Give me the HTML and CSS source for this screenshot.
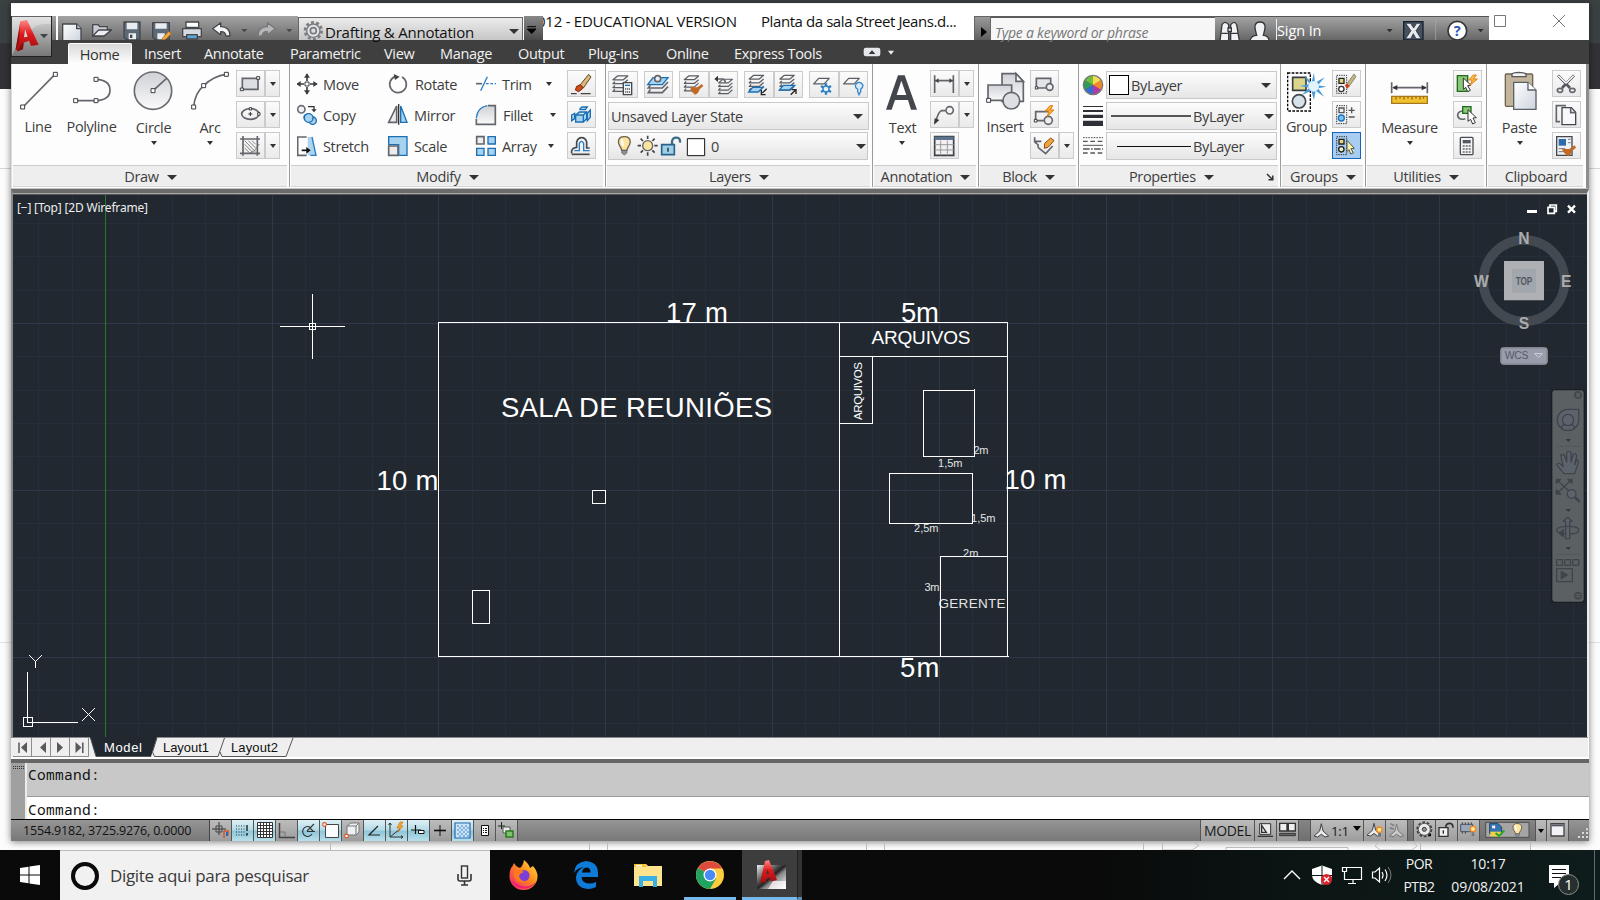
FILE: index.html
```html
<!DOCTYPE html>
<html lang="pt-BR">
<head>
<meta charset="utf-8">
<title>AutoCAD 2012 - Planta da sala</title>
<link rel="stylesheet" href="styles.css">
</head>
<body>
<svg class="defs" width="0" height="0" aria-hidden="true">
  <defs>
    <linearGradient id="gm" x1="0" y1="0" x2="0" y2="1"><stop offset="0" stop-color="#cfd1d6"/><stop offset="1" stop-color="#fafafa"/></linearGradient>
    <linearGradient id="gp" x1="0" y1="0" x2="1" y2="1"><stop offset="0" stop-color="#fff"/><stop offset="1" stop-color="#cdd4de"/></linearGradient>
    <linearGradient id="gr" x1="0" y1="0" x2="0" y2="1"><stop offset="0" stop-color="#ff8a86"/><stop offset=".45" stop-color="#e01a1c"/><stop offset="1" stop-color="#9c0f12"/></linearGradient>
    <linearGradient id="gf" x1="1" y1="0" x2="0" y2="1"><stop offset="0" stop-color="#ffe34a"/><stop offset=".45" stop-color="#ff8a1c"/><stop offset="1" stop-color="#f0187e"/></linearGradient>
    <linearGradient id="gk" x1="0" y1="0" x2="1" y2="1"><stop offset="0" stop-color="#eee"/><stop offset=".5" stop-color="#222"/><stop offset=".6" stop-color="#888"/><stop offset="1" stop-color="#fff"/></linearGradient>
    <symbol id="stack" viewBox="0 0 60 60" overflow="visible"><path class="sh" d="M16 2H48L34 14H2ZM8 20L2 26H34L48 14M8 31L2 38H34L48 25M8 43L2 50H34L48 37"/></symbol>
    <symbol id="plane" viewBox="0 0 60 60" overflow="visible"><path class="sh" d="M16 2H50L34 20H0Z"/></symbol>
    <symbol id="scaleA" viewBox="0 0 44 44" overflow="visible"><path d="M22 1L27 23L44 38L33 41L22 33L11 41L0 38L17 23Z" fill="#e9e9ec" stroke="#3c3f44" stroke-width="3"/></symbol>
    <symbol id="bulb" viewBox="0 0 40 60" overflow="visible"><path d="M12 44C12 34 2 30 2 18C2 7 10 2 20 2S38 7 38 18C38 30 28 34 28 44Z" fill="#fbe3a0" stroke="#6c5f4c" stroke-width="4"/><path d="M12 44H28V52L20 58L12 52Z" fill="#8c9098" stroke="#5b5f66" stroke-width="2"/><path d="M12 10L16 30" stroke="#fff" stroke-width="6"/></symbol>
  </defs>
</svg>

<div class="desktop">
<div class="window">
  <header class="titlebar">
    <div class="appbtn">
      <svg width="41" height="40" viewBox="34 48 123 120"><path d="M110 78Q130 70 154 72V48H36V168Q60 110 110 78Z" fill="#fff" opacity=".3"/><path d="M48 148L62 64L82 60L117 134L94 138L88 122L72 128L70 148L54 154Z" fill="url(#gr)"/><path d="M76 88L84 110L73 112Z" fill="#d8d8d8"/><path d="M54 154L70 148L72 128L64 132ZM48 148L62 64L58 130Z" fill="#6f0a0c" opacity=".6"/><path d="M121 102H145L133 115Z" fill="#3c444d"/></svg>
    </div>
    <div class="qat">
      <svg width="240" height="23" viewBox="174 51 720 69"><g stroke="#44474c" stroke-width="4" stroke-linejoin="round">
        <path d="M188 72H230L243 86V122H188Z" fill="url(#gp)"/><path d="M230 72V86H243" fill="#b9c0ca"/>
        <path d="M278 108V74H294L300 80H322V90H334L312 108Z" fill="#c9cdd3"/><path d="M278 108L296 90H334L312 108Z" fill="#eceef1"/>
        <path d="M372 66H420V118H378L372 112Z" fill="#5e6978"/><path d="M380 68H412V88H380ZM386 100H408V118H386Z" fill="#e9ecf0" stroke="none"/><path d="M390 104H397V114H390Z" fill="#444" stroke="none"/>
        <path d="M458 68H508V118H464L458 112Z" fill="#5e6978"/><path d="M466 70H500V86H466ZM472 100H494V118H472Z" fill="#e9ecf0" stroke="none"/><path d="M488 114L506 94L514 101L497 118L486 121Z" fill="#f2a93b" stroke="#a25a14" stroke-width="2"/>
        <path d="M558 84V66H596V84M560 82H592V90H560Z" fill="#fff"/><path d="M548 86H604V110H548Z" fill="#d6d9de"/><path d="M560 104H592V117H560Z" fill="#5fa5cf"/>
        <path d="M638 86L662 68V80Q690 80 690 108H678Q676 94 662 95V104Z" fill="#f4f5f7"/>
        <path d="M826 86L802 68V80Q774 80 774 108H786Q788 94 802 95V104Z" fill="#b4b6ba" stroke="#777"/></g>
        <path d="M724 87H742L733 97ZM859 87H877L868 97Z" fill="#45484c"/></svg>
    </div>
    <div class="workspace"><svg width="24" height="22" viewBox="905 55 72 66"><circle cx="939" cy="93" r="25" fill="none" stroke="#7c7f84" stroke-width="8" stroke-dasharray="9 6.7"/><circle cx="939" cy="93" r="20" fill="#e4e4e6" stroke="#777a80" stroke-width="4"/><circle cx="939" cy="93" r="9" fill="#ddd" stroke="#777a80" stroke-width="5"/></svg><span class="ws-name">Drafting &amp; Annotation</span><i class="tri"></i></div>
    <div class="qat-more"><svg width="18" height="23" viewBox="372 51 54 69"><path d="M382 80H408M382 87H408L395 101Z" fill="#000" stroke="#000" stroke-width="3"/></svg></div>
    <div class="doc-title"><span class="ver">012 - EDUCATIONAL VERSION</span><span class="doc">Planta da sala Street Jeans.d...</span></div>
    <div class="info-arrow"><svg width="17" height="23" viewBox="0 0 17 23"><path d="M6 10L12 15L6 20Z" fill="#000"/></svg></div>
    <div class="search-help">Type a keyword or phrase</div>
    <div class="infobar">
      <svg width="61" height="23" viewBox="1247 51 183 69"><g transform="translate(1200 0)" fill="#f1f2f4" stroke="#34373c" stroke-width="4"><path d="M62 122L68 74Q76 60 88 74V122ZM94 122V74Q106 60 112 74L120 122Z"/><path d="M66 100H88M94 100H116M86 84H96V94H86Z"/><path d="M152 122Q156 106 172 106L170 98Q160 66 182 66Q204 66 194 98L192 106Q206 106 210 122Z"/></g></svg>
      <span class="signin">Sign In</span>
      <svg width="104" height="23" viewBox="1757 51 312 69"><g transform="translate(1200 0)"><path d="M562 87H580L571 97ZM835 87H853L844 97Z" fill="#2e3033"/><path d="M613 65H671V120H613Z" fill="#46505f" stroke="#17202f" stroke-width="4"/><path d="M619 70H634L643 84L652 70H665L650 92L665 116H650L642 101L634 116H619L635 92Z" fill="#e8eaee" stroke="#17202f" stroke-width="2"/><path d="M709 60V120" stroke="#aaa" stroke-width="2"/><circle cx="774" cy="92" r="28" fill="#fff" stroke="#34373c" stroke-width="5"/></g><text x="1974" y="109" class="help-q">?</text></svg>
    </div>
    <div class="winctl"><svg width="90" height="36" viewBox="1500 3 90 36" fill="none" stroke="#777"><path d="M1494.5 14.5H1505.5V25.5H1494.5ZM1553 14L1565 26M1565 14L1553 26" /></svg></div>
  </header>

  <nav class="tabs">
    <span class="tab active">Home</span><span class="tab w60">Insert</span><span class="tab w86">Annotate</span><span class="tab w94">Parametric</span><span class="tab w56">View</span><span class="tab w78">Manage</span><span class="tab w70">Output</span><span class="tab w78">Plug-ins</span><span class="tab w68">Online</span><span class="tab w129">Express Tools</span>
    <svg width="34" height="12" viewBox="190 142 102 36"><rect x="192" y="144" width="50" height="26" rx="7" fill="#e6e7ea"/><path d="M207 163H227L217 152Z" fill="#333"/><path d="M265 153H283L274 165Z" fill="#eee"/></svg>
  </nav>

  <section class="ribbon">
    <div class="panel p-draw">
      <div class="pbody">
        <div class="big w52"><svg width="52" height="50" viewBox="36 192 156 150"><path class="ln" d="M69 321L165 223"/><path class="hd" d="M62 315H74V327H62ZM160 217H172V229H160Z"/></svg><span>Line</span></div>
        <div class="big w55"><svg width="55" height="50" viewBox="192 192 165 150"><path class="ln" d="M227 302H288Q330 300 330 270Q330 240 288 238"/><path class="hd" d="M221 296H233V308H221ZM282 296H294V308H282ZM282 232H294V244H282Z"/></svg><span>Polyline</span></div>
        <div class="big w69 low"><svg width="69" height="50" viewBox="357 192 207 150"><circle cx="459" cy="272" r="56" fill="url(#gm)" stroke="#6a6c72" stroke-width="5"/><path class="ln" d="M459 272L499 236"/><path class="hd" d="M453 266H465V278H453Z"/></svg><span>Circle</span><i class="dn"></i></div>
        <div class="big w46 low"><svg width="46" height="50" viewBox="564 192 138 150"><path class="ln" d="M581 321Q584 280 611 257Q640 228 679 223"/><path class="hd" d="M575 315H587V327H575ZM605 251H617V263H605ZM673 217H685V229H673Z"/></svg><span class="nr">Arc</span><i class="dn nr"></i></div>
        <div class="col">
          <div class="row"><b class="btn"><svg width="29" height="27" viewBox="708 210 87 81"><path class="ln" d="M727 235H774V268H727Z" fill="#dcdee3"/><path class="hd" d="M721 264H730V272H721ZM770 230H779V238H770Z"/></svg></b><b class="btn dd"><i class="dn"></i></b></div>
          <div class="row"><b class="btn"><svg width="29" height="27" viewBox="708 303 87 81"><ellipse class="ln" cx="751" cy="342" rx="26" ry="16"/><path d="M745 342H757M751 336V348" stroke="#333" stroke-width="3"/><path class="hd" d="M748 323H755V330H748ZM773 338H780V346H773Z"/></svg></b><b class="btn dd"><i class="dn"></i></b></div>
          <div class="row"><b class="btn"><svg width="29" height="27" viewBox="708 396 87 81"><path class="ln" d="M720 417H780M720 460H780M729 408V467M772 408V467"/><path d="M734 422L766 455M734 433L758 457M734 444L747 457M745 422L767 444M756 422L767 433M778 432L764 452L748 460" stroke="#666" stroke-width="2.4" fill="none"/></svg></b><b class="btn dd"><i class="dn"></i></b></div>
        </div>
      </div>
      <div class="ptitle">Draw<i class="tri"></i></div>
    </div>

    <div class="panel p-modify">
      <div class="pbody">
        <div class="col c90">
          <div class="row"><svg width="26" height="27" viewBox="891 210 78 81"><path d="M921 222V282M891 252H951" stroke="#3b3e43" stroke-width="5"/><path d="M921 220L912 233H930ZM921 284L912 271H930ZM889 252L902 243V261ZM953 252L940 243V261Z" fill="#3b3e43"/><path d="M912 243H930V261H912Z" fill="#fff"/><path class="hd" d="M915 246H927V258H915Z"/></svg><span>Move</span></div>
          <div class="row"><svg width="26" height="27" viewBox="891 303 78 81"><circle cx="904" cy="328" r="11" fill="#f3f3f5" stroke="#6a6c72" stroke-width="5"/><g class="bl"><circle cx="921" cy="352" r="9"/><circle cx="938" cy="362" r="11"/><circle cx="926" cy="354" r="13"/></g><path d="M924 320H942V331" stroke="#333" stroke-width="4" fill="none"/><path d="M934 328H950L942 337Z" fill="#333"/></svg><span>Copy</span></div>
          <div class="row"><svg width="26" height="27" viewBox="891 396 78 81"><path class="ln" d="M920 411H893V466H920"/><path d="M923 411H936L948 466H923Z" fill="#abd5ec"/><path class="bs" d="M936 411L948 466H931"/><path d="M905 451H922" stroke="#111" stroke-width="5"/><path d="M919 441L932 451L919 461Z" fill="#111"/></svg><span>Stretch</span></div>
        </div>
        <div class="col c88">
          <div class="row"><svg width="28" height="27" viewBox="1161 210 84 81"><path class="ln" d="M1187 229A25 25 0 1 0 1206 231"/><path d="M1181 222L1199 230L1185 240Z" fill="#444"/></svg><span>Rotate</span></div>
          <div class="row"><svg width="27" height="27" viewBox="1161 303 81 81"><path d="M1190 318V367H1166Z" fill="#eee" class="ln"/><path d="M1202 318V367H1221Z" class="bl"/><path d="M1196 312V374" stroke="#333" stroke-width="4"/></svg><span>Mirror</span></div>
          <div class="row"><svg width="27" height="27" viewBox="1161 396 81 81"><path class="bl" d="M1166 410H1221V466H1196V434H1166Z"/><path d="M1166 438H1194V466H1166Z" fill="#ececef" class="ln"/></svg><span>Scale</span></div>
        </div>
        <div class="col c92">
          <div class="row"><svg width="27" height="27" viewBox="225 210 81 81"><path class="ln" d="M228 251H246" /><path class="bs" d="M262 230L242 272"/><path class="bs" d="M258 251H288" stroke-dasharray="8 5"/></svg><span class="tx46">Trim</span><i class="dn"></i></div>
          <div class="row"><svg width="28" height="27" viewBox="225 303 84 81"><path d="M229 373V352Q232 322 262 317H286V373Z" fill="url(#gm)"/><path class="bs" d="M229 354Q232 322 262 317"/><path class="ln" d="M229 356V373H286V317H264"/></svg><span class="tx49">Fillet</span><i class="dn"></i></div>
          <div class="row"><svg width="27" height="27" viewBox="225 396 81 81"><path d="M230 410H252V432H230Z" fill="#eee" class="ln"/><path class="bl" d="M264 410H286V432H264ZM230 445H252V466H230ZM264 445H286V466H264Z"/></svg><span class="tx48">Array</span><i class="dn"></i></div>
        </div>
        <div class="col">
          <div class="row"><b class="btn"><svg width="29" height="27" viewBox="501 210 87 81"><path d="M541 254L566 223L573 231L550 264Z" fill="#e0b678" stroke="#5c4b33" stroke-width="3"/><path d="M541 254L550 264L536 275L526 270L530 259Z" fill="#cf4a16" stroke="#7c2b0c" stroke-width="3"/><path d="M513 281H530M542 281H572" stroke="#444" stroke-width="4"/></svg></b></div>
          <div class="row"><b class="btn"><svg width="29" height="27" viewBox="501 303 87 81"><path class="bl" d="M527 345H550V366H527ZM550 345L560 336V356L550 366M527 345L538 336H560M562 340L571 330V352L562 362ZM515 345L524 340V356L515 362ZM540 326L546 321H562L556 329H540Z"/></svg></b></div>
          <div class="row"><b class="btn"><svg width="29" height="27" viewBox="501 396 87 81"><path d="M515 460Q512 444 530 442V426Q534 413 545 413T560 426V444H569" fill="none" stroke="#45484d" stroke-width="5"/><path class="bs" d="M523 452H538V430Q544 418 551 430V452H569"/><path d="M515 463H569" stroke="#45484d" stroke-width="5"/></svg></b></div>
        </div>
      </div>
      <div class="ptitle">Modify<i class="tri"></i></div>
    </div>

    <div class="panel p-layers">
      <div class="pbody">
        <div class="col">
          <div class="row lrow">
            <b class="btn"><svg width="29" height="27" viewBox="624 213 87 81"><use href="#stack" x="637" y="226" width="58" height="58"/><path d="M670 248H695V284H670Z" fill="#f4f4f6" stroke="#45484d" stroke-width="4"/><path d="M675 256H690" stroke="#1c7ac9" stroke-width="4"/><path d="M675 267H690M675 276H690" stroke="#555" stroke-width="4" stroke-dasharray="4 2"/></svg></b>
            <b class="btn g6"><svg width="29" height="27" viewBox="729 213 87 81"><path d="M756 233H801L784 254H740Z" class="bl"/><path class="ln" d="M748 256L742 264H784L801 246M748 268L742 278H784L801 260"/><circle cx="770" cy="236" r="9" class="ln" fill="#eee"/></svg></b>
            <b class="btn g6"><svg width="29" height="27" viewBox="834 213 87 81"><use href="#stack" x="848" y="226" width="56" height="56"/><path d="M870 262H890L902 252L907 258L896 268Q892 282 882 284Q872 278 868 268Z" fill="#c26a23"/></svg></b>
            <b class="btn"><svg width="29" height="27" viewBox="921 213 87 81"><use href="#stack" x="946" y="236" width="58" height="54"/><path d="M946 237H962Q970 240 970 248" class="ln"/><path d="M948 227L937 237L948 246Z" fill="#333"/></svg></b>
            <b class="btn g6"><svg width="29" height="27" viewBox="1029 213 87 81"><use href="#stack" x="1043" y="224" width="56" height="56"/><path d="M1055 262H1086L1072 276H1043Z" class="bl"/><path d="M1097 266L1084 279M1081 270V284H1094" stroke="#222" stroke-width="4" fill="none"/></svg></b>
            <b class="btn"><svg width="29" height="27" viewBox="1120 213 87 81"><use href="#stack" x="1136" y="224" width="56" height="56"/><path d="M1148 256H1182L1166 270H1136Z" class="bl"/><path d="M1170 284L1184 271M1173 269H1186V282" stroke="#222" stroke-width="4" fill="none"/></svg></b>
            <b class="btn g6"><svg width="29" height="27" viewBox="24 213 87 81"><use href="#plane" x="38" y="233" width="56" height="56"/><path d="M75 250V284M60 258L90 276M90 258L60 276" stroke="#2f7fc4" stroke-width="7"/><circle cx="75" cy="267" r="9" fill="#e6f2fb" stroke="#2f7fc4" stroke-width="4"/></svg></b>
            <b class="btn"><svg width="29" height="27" viewBox="114 213 87 81"><use href="#plane" x="128" y="233" width="56" height="56"/><path d="M170 275V268Q162 262 163 256Q166 247 174 247T186 256Q186 262 179 268V275L174 284Z" fill="#d9ebfa" stroke="#3a86cb" stroke-width="4"/></svg></b>
          </div>
          <div class="select s261"><span>Unsaved Layer State</span><i class="tri"></i></div>
          <div class="select s260"><svg width="100" height="28" viewBox="624 396 300 84"><use href="#bulb" x="653" y="408" width="40" height="59"/><path d="M743 407V417M743 457V467M713 437H723M763 437H773M722 416L729 423M764 416L757 423M722 458L729 451M764 458L757 451" stroke="#444" stroke-width="5"/><circle cx="743" cy="437" r="15" fill="#fbe3a0" stroke="#666" stroke-width="4"/><path d="M816 434V424Q818 412 830 413T840 428" fill="none" stroke="#3d6d8a" stroke-width="7"/><path d="M785 434H823V464H785Z" fill="#9fd0ea" stroke="#2a6387" stroke-width="5"/><path d="M804 443V455" stroke="#222" stroke-width="4"/><path d="M862 416H914V467H862Z" fill="#fff" stroke="#111" stroke-width="3"/></svg><span>0</span><i class="tri"></i></div>
        </div>
      </div>
      <div class="ptitle">Layers<i class="tri"></i></div>
    </div>

    <div class="panel p-anno">
      <div class="pbody">
        <div class="big w58 low"><svg width="58" height="50" viewBox="219 192 174 150"><path d="M258 329L294 226H314L351 329H333L324 300H285L275 329ZM290 285H319L304 242Z" fill="#43464c" fill-rule="evenodd"/></svg><span class="nudge">Text</span><i class="dn"></i></div>
        <div class="col">
          <div class="row"><b class="btn"><svg width="29" height="27" viewBox="390 210 87 81"><path class="ln" d="M404 226V279M460 226V279M406 242H458"/><path d="M405 242L416 235V249ZM459 242L448 235V249Z" fill="#444"/></svg></b><b class="btn dd"><i class="dn"></i></b></div>
          <div class="row"><b class="btn"><svg width="29" height="27" viewBox="390 303 87 81"><path class="ln" d="M408 366Q412 340 424 332H436"/><circle class="ln" cx="449" cy="331" r="11"/><path d="M402 374L404 355L418 360Z" fill="#333"/></svg></b><b class="btn dd"><i class="dn"></i></b></div>
          <div class="row"><b class="btn"><svg width="29" height="27" viewBox="390 396 87 81"><path d="M404 410H461V466H404Z" fill="#f2f2f4" stroke="#3d4046" stroke-width="5"/><path d="M404 410H461V420H404Z" fill="#5d7390"/><path d="M404 434H461M404 450H461M422 422V466M442 422V466" stroke="#999" stroke-width="3"/></svg></b></div>
        </div>
      </div>
      <div class="ptitle">Annotation<i class="tri"></i></div>
    </div>

    <div class="panel p-block">
      <div class="pbody">
        <div class="big w51"><svg width="51" height="50" viewBox="537 192 153 150"><path d="M606 221H648L670 244V304H606Z" fill="url(#gm)" class="ln"/><path d="M648 221V244H670Z" fill="#fff" class="ln"/><path d="M564 255H635V301H564Z" fill="url(#gm)" class="ln"/><circle cx="634" cy="302" r="25" fill="#dddfe3" class="ln"/><path class="hd" d="M560 295H572V307H560Z"/></svg><span class="nl">Insert</span></div>
        <div class="col">
          <div class="row"><b class="btn"><svg width="29" height="27" viewBox="690 210 87 81"><path d="M709 235H752V264H709Z" fill="#e3e4e8" class="ln"/><circle class="ln" cx="749" cy="261" r="10" fill="#eee"/><path class="hd" d="M706 260H713V267H706Z"/></svg></b></div>
          <div class="row"><b class="btn"><svg width="29" height="27" viewBox="690 303 87 81"><path class="ln" d="M744 335H707V362H735"/><circle class="ln" cx="745" cy="361" r="12" fill="#eee"/><path class="hd" d="M703 358H711V366H703Z"/><path d="M750 317L736 333H747L742 349L762 330H751L758 317Z" fill="#f9b12f" stroke="#e07a18" stroke-width="3"/></svg></b></div>
          <div class="row"><b class="btn"><svg width="29" height="27" viewBox="690 396 87 81"><path class="ln" d="M704 412V424H724M704 426L712 432M714 442L737 461L758 438M714 442V432"/><path d="M734 430L752 414L762 422L744 442L733 445Z" fill="#efa53c" stroke="#8b4c15" stroke-width="3"/></svg></b><b class="btn dd"><i class="dn"></i></b></div>
        </div>
      </div>
      <div class="ptitle">Block<i class="tri"></i></div>
    </div>

    <div class="panel p-props">
      <div class="pbody">
        <svg width="27" height="101" viewBox="837 192 81 303"><circle cx="879" cy="255" r="28" fill="#e8452f"/><path d="M879 255L855 241A28 28 0 0 1 879 227Z" fill="#6cbf3a"/><path d="M879 255V227A28 28 0 0 1 903 241Z" fill="#f5dc55"/><path d="M879 255L903 241A28 28 0 0 1 903 269Z" fill="#f08a2c"/><path d="M879 255L855 269A28 28 0 0 1 855 241Z" fill="#2f9a5a"/><path d="M879 255V283A28 28 0 0 1 855 269Z" fill="#2f6fd1"/><path d="M879 255V283A28 28 0 0 0 903 269Z" fill="#b03aa5"/><circle cx="879" cy="255" r="29" fill="none" stroke="#777" stroke-width="4"/><path d="M849 318H909V321H849ZM849 330H909V336H849ZM849 344H909V354H849ZM849 362H909V378H849Z" fill="#2e3035"/><path d="M849 413H909" stroke="#555" stroke-width="3" stroke-dasharray="5 3"/><path d="M849 424H909M849 459H909" stroke="#555" stroke-width="4" stroke-dasharray="14 8"/><path d="M849 436H909" stroke="#555" stroke-width="3"/><path d="M849 447H909" stroke="#555" stroke-width="4" stroke-dasharray="20 4 5 4"/></svg>
        <div class="col">
          <div class="select s171 sp1"><i class="swatch"></i><span>ByLayer</span><i class="tri t2"></i></div>
          <div class="select s171"><i class="lw"></i><span>ByLayer</span><i class="tri"></i></div>
          <div class="select s171 sp3"><i class="lt"></i><span>ByLayer</span><i class="tri"></i></div>
        </div>
      </div>
      <div class="ptitle pr">Properties<i class="tri"></i><svg class="launch" width="8" height="8" viewBox="0 0 8 8"><path d="M1 1L6 6M2.5 6.8H6.8V2.5" stroke="#333" stroke-width="1.5" fill="none"/></svg></div>
    </div>

    <div class="panel p-groups">
      <div class="pbody">
        <div class="big w51"><svg width="51" height="50" viewBox="243 192 153 150"><path d="M263 219H331V333H263Z" fill="none" stroke="#000" stroke-width="4" stroke-dasharray="8 4"/><path d="M278 232H318V271H278Z" fill="#dcd68c" stroke="#3a3c40" stroke-width="5"/><circle cx="297" cy="304" r="20" fill="#d6e2ea" stroke="#44484e" stroke-width="5"/><path d="M342 218L345 248L374 232L354 256L380 260L354 265L372 290L347 272L342 300L334 272L304 286L328 263L300 258L328 252L312 226L335 247Z" fill="#4b9bd6"/><circle cx="341" cy="259" r="16" fill="#e2f3fc"/></svg><span>Group</span></div>
        <div class="col">
          <div class="row"><b class="btn"><svg width="29" height="27" viewBox="396 210 87 81"><path d="M410 226H440V280H410Z" class="dash"/><path d="M417 235H432V250H417Z" fill="#e4d77f" stroke="#222" stroke-width="4"/><circle cx="424" cy="267" r="8" fill="#fff" stroke="#333" stroke-width="4"/><path d="M440 252L462 222L468 230L448 258Z" fill="#c5b37a" stroke="#666" stroke-width="2"/><path d="M434 256L441 251L449 258L442 266Z" fill="#d23a1c"/></svg></b></div>
          <div class="row"><b class="btn"><svg width="29" height="27" viewBox="396 303 87 81"><path d="M410 317H440V371H410Z" class="dash"/><path d="M417 324H432V338H417Z" fill="#eee" stroke="#555" stroke-width="4"/><circle cx="424" cy="354" r="9" fill="#7fc0ee" stroke="#1d75bd" stroke-width="4"/><path d="M446 331H464M455 322V340M446 351H464" stroke="#555" stroke-width="4"/></svg></b></div>
          <div class="row"><b class="btn on"><svg width="29" height="27" viewBox="396 396 87 81"><path d="M410 410H440V464H410Z" class="dash"/><path d="M417 418H432V432H417Z" fill="#e4d77f" stroke="#222" stroke-width="4"/><circle cx="424" cy="448" r="8" fill="#e9f1c8" stroke="#222" stroke-width="4"/><path d="M441 421L463 445L453 446L460 459L452 462L447 449L441 455Z" fill="#fff3a8" stroke="#555" stroke-width="3"/></svg></b></div>
        </div>
      </div>
      <div class="ptitle">Groups<i class="tri"></i></div>
    </div>

    <div class="panel p-util">
      <div class="pbody">
        <div class="big w87 low"><svg width="87" height="50" viewBox="498 192 261 150"><path class="ln" d="M575 247V280M682 247V280M580 263H678"/><path d="M577 263L592 255V271ZM680 263L665 255V271Z" fill="#333"/><path d="M575 289H682V310H575Z" fill="#f0c22e" stroke="#a8761c" stroke-width="4"/><path d="M588 291V299M600 291V296M612 291V299M624 291V296M636 291V299M648 291V296M660 291V299M671 291V296" stroke="#7a5010" stroke-width="3"/></svg><span>Measure</span><i class="dn"></i></div>
        <div class="col">
          <div class="row"><b class="btn"><svg width="29" height="27" viewBox="759 210 87 81"><path d="M772 227H803V274H772Z" fill="#8ac776" stroke="#216b1c" stroke-width="4"/><path d="M790 234L813 256L803 257L811 271L803 275L797 262L790 268Z" fill="#fff" stroke="#333" stroke-width="3"/><path d="M820 225L806 240H817L810 256L832 237H820L829 225Z" fill="#fbc33d" stroke="#e07a18" stroke-width="3"/></svg></b></div>
          <div class="row"><b class="btn"><svg width="29" height="27" viewBox="759 303 87 81"><path d="M788 320H813V340H788Z" fill="#8ac776" stroke="#216b1c" stroke-width="4"/><path class="ln" d="M786 333Q772 336 773 348Q778 362 796 356"/><path d="M804 329L829 353L819 354L826 368L818 372L812 358L804 364Z" fill="#fff" stroke="#333" stroke-width="3"/></svg></b></div>
          <div class="row"><b class="btn"><svg width="29" height="27" viewBox="759 396 87 81"><rect x="781" y="412" width="38" height="52" rx="3" fill="#f4f4f6" stroke="#4a4e55" stroke-width="4"/><path d="M788 420H812V430H788Z" fill="#55595f"/><path d="M788 438H812M788 447H812M788 456H812" stroke="#666" stroke-width="4" stroke-dasharray="6 3"/></svg></b></div>
        </div>
      </div>
      <div class="ptitle">Utilities<i class="tri"></i></div>
    </div>

    <div class="panel p-clip">
      <div class="pbody">
        <div class="big w65 low"><svg width="65" height="50" viewBox="861 192 195 150"><rect x="916" y="222" width="82" height="97" rx="3" fill="#c3b49c" stroke="#6f6250" stroke-width="4"/><path d="M936 230V222Q938 218 956 217Q974 218 978 222V230Z" fill="#f3f3f4" stroke="#55585e" stroke-width="4"/><path d="M941 247H984L1008 270V328H941Z" fill="url(#gp)" stroke="#5b5f66" stroke-width="4"/><path d="M984 247V270H1008" fill="#fff" stroke="#5b5f66" stroke-width="4"/></svg><span>Paste</span><i class="dn"></i></div>
        <div class="col">
          <div class="row"><b class="btn"><svg width="29" height="27" viewBox="1056 210 87 81"><path d="M1074 226L1110 264M1122 226L1086 264" stroke="#55585e" stroke-width="8"/><path d="M1075 227L1098 250M1121 227L1098 250" stroke="#fff" stroke-width="4"/><ellipse cx="1080" cy="271" rx="8" ry="6" class="ln"/><ellipse cx="1117" cy="271" rx="8" ry="6" class="ln"/></svg></b></div>
          <div class="row"><b class="btn"><svg width="29" height="27" viewBox="1056 303 87 81"><path class="ln" d="M1098 317H1069V365H1080"/><path d="M1086 323H1114L1127 337V374H1086Z" fill="#f8f8fa" stroke="#44474d" stroke-width="4"/><path d="M1112 323V338H1127" class="ln"/></svg></b></div>
          <div class="row"><b class="btn"><svg width="29" height="27" viewBox="1056 396 87 81"><path d="M1070 410H1116V466H1070Z" fill="#eef1f5" stroke="#44474d" stroke-width="4"/><path d="M1076 417H1098V437H1076Z" fill="#2f6ba8"/><path d="M1104 418H1112M1104 428H1112M1076 446H1096M1076 455H1092" stroke="#777" stroke-width="3"/><path d="M1086 447H1108L1124 436L1128 443L1116 453Q1112 466 1104 468Q1092 462 1086 447Z" fill="#c26a23"/></svg></b></div>
        </div>
      </div>
      <div class="ptitle">Clipboard</div>
    </div>
  </section>

  <main class="viewport">
    <svg width="1574" height="542" viewBox="13 195 1574 542">
      <path class="g-min" d="M38.5 195v542M72.5 195v542M138.5 195v542M172.5 195v542M205.5 195v542M238.5 195v542M305.5 195v542M339.5 195v542M372.5 195v542M405.5 195v542M472.5 195v542M505.5 195v542M539.5 195v542M572.5 195v542M638.5 195v542M672.5 195v542M705.5 195v542M739.5 195v542M805.5 195v542M839.5 195v542M872.5 195v542M905.5 195v542M972.5 195v542M1006.5 195v542M1039.5 195v542M1072.5 195v542M1139.5 195v542M1172.5 195v542M1206.5 195v542M1239.5 195v542M1306.5 195v542M1339.5 195v542M1373.5 195v542M1406.5 195v542M1473.5 195v542M1506.5 195v542M1539.5 195v542M1573.5 195v542M13 223.5h1574M13 256.5h1574M13 290.5h1574M13 356.5h1574M13 390.5h1574M13 423.5h1574M13 456.5h1574M13 523.5h1574M13 557.5h1574M13 590.5h1574M13 623.5h1574M13 690.5h1574M13 723.5h1574"/>
      <path class="g-maj" d="M272.5 195v542M438.5 195v542M605.5 195v542M772.5 195v542M939.5 195v542M1106.5 195v542M1272.5 195v542M1439.5 195v542M13 323.5h1574M13 490.5h1574M13 657.5h1574"/>
      <path d="M105.5 195v542" stroke="#267a27"/>
      <text x="17" y="212" class="vlabel" textLength="131">[−] [Top] [2D Wireframe]</text>
      <g class="plan">
        <path d="M438.5 322.5H1007.5V656.5H438.5ZM839.5 322.5V656.5M839.5 356.5H1007.5M872.5 356.5V423.5H839.5M923.5 390.5H974.5V456.5H923.5ZM974.5 389V391M889.5 473.5H972.5V523.5H889.5ZM940.5 656.5V556.5H1007.5M1007 656.5H1009M592.5 490.5H605.5V503.5H592.5ZM472.5 590.5H489.5V623.5H472.5Z"/>
        <path d="M280 326.5H345M312.5 294V359M309.5 323.5H315.5V329.5H309.5Z"/>
        <path d="M23.5 717.5H32.5V726.5H23.5ZM27.5 672V722.5H78"/>
        <path class="aa" d="M29 655L35.5 661.5L42 655M35.5 661V668M82 708L95 721M95 708L82 721"/>
      </g>
      <g class="cadtext">
        <text x="501" y="416.7" font-size="27.5" textLength="271">SALA DE REUNIÕES</text>
        <text x="666" y="321.7" font-size="27.5" textLength="62">17 m</text>
        <text x="376.500" y="489.700" font-size="27.5" textLength="62">10 m</text>
        <text x="901" y="321.700" font-size="27.5" textLength="38">5m</text>
        <text x="900" y="676.700" font-size="27.5" textLength="39.500">5m</text>
        <text x="1004.500" y="488.700" font-size="27.5" textLength="62">10 m</text>
        <text x="871.5" y="343.700" font-size="19" textLength="99">ARQUIVOS</text>
        <text transform="translate(861.8 420) rotate(-90)" font-size="11.5" textLength="58">ARQUIVOS</text>
        <g class="soft">
        <text x="973.5" y="453.6" font-size="11" textLength="15">2m</text>
        <text x="938" y="467" font-size="11" textLength="24.5">1,5m</text>
        <text x="971" y="522" font-size="11" textLength="24.5">1,5m</text>
        <text x="914" y="532" font-size="11" textLength="24.5">2,5m</text>
        <text x="963" y="556.6" font-size="11" textLength="15.5">2m</text>
        <text x="924.5" y="591" font-size="11" textLength="15">3m</text>
        <text x="938.5" y="608" font-size="13.5" textLength="67">GERENTE</text>
        </g>
      </g>
      <g transform="translate(1400 190) scale(.33333)">
        <path d="M381 60H411V69H381Z" fill="#fff"/><path d="M444 52H463V70H444ZM450 52V45H469V64H463" fill="none" stroke="#fff" stroke-width="5"/><path d="M504 47L525 68M525 47L504 68" stroke="#fff" stroke-width="7"/>
        <circle cx="372" cy="272" r="122" fill="none" stroke="#434950" stroke-width="28"/>
        <path d="M312 213H432V331H312Z" fill="#afb0b3"/><path d="M336 237H408V308H336Z" fill="#a1a7ac"/>
        <text x="372" y="284" class="cube" font-size="31" fill="#53585e" textLength="50" lengthAdjust="spacingAndGlyphs">TOP</text>
        <g class="compass"><text x="372" y="163">N</text><text x="372" y="418">S</text><text x="244" y="290">W</text><text x="499" y="290">E</text></g>
        <rect x="301" y="472" width="142" height="52" rx="10" fill="#999dab"/><rect x="304" y="475" width="136" height="46" rx="8" fill="none" stroke="#8b8f9c" stroke-width="4"/>
        <text x="314" y="507" class="wcs" textLength="71">WCS</text><path d="M404 491H427L415.500 502Z" fill="none" stroke="#cdd0da" stroke-width="3"/>
        <rect x="453" y="597" width="102" height="642" rx="10" fill="#191d24"/><rect x="457" y="601" width="94" height="634" rx="7" fill="#5b6063"/>
        <g fill="none" stroke="#3f444c" stroke-width="4" stroke-linejoin="round">
          <path d="M470 769H544M470 1093H544" stroke="#53585c"/>
          <path d="M504 658H536V690A32 32 0 1 1 504 658Z" fill="#5d636c"/><circle cx="504" cy="690" r="17"/><path d="M492 703L482 714M516 703L526 714"/>
          <path d="M492 851L470 824Q474 816 484 824L490 830L482 796Q488 790 494 798L500 816V788Q506 780 513 788V816L520 792Q528 788 530 798L524 824L530 810Q538 812 534 820L524 851Z" fill="#5d636c"/>
          <path d="M471 870L514 910M514 870L471 910" /><path d="M469 868H482L469 880ZM516 868V880L503 868ZM469 912V900L482 912Z" fill="#3f444c"/><circle cx="515" cy="912" r="13" fill="#5d636c"/><path d="M525 922L539 935" stroke-width="8"/>
          <path d="M497 1046V994H490L503 982L516 994H509V1046Z" fill="#5d636c"/><path d="M497 1032Q470 1030 470 1020T503 1009T536 1020T509 1032"/><path d="M490 1020V1040L478 1030Z" fill="#3f444c"/>
          <path d="M470 1109H487V1126H470ZM494 1109H511V1126H494ZM518 1109H536V1126H518ZM470 1136H517V1175H470Z"/><path d="M484 1145V1166L502 1155Z" fill="#3f444c"/>
          <circle cx="534" cy="615" r="12" fill="#44494e" stroke="none"/><path d="M529 610L539 620M539 610L529 620" stroke="#5d6266"/><circle cx="534" cy="1217" r="12" fill="#44494e" stroke="none"/><path d="M527 1214H541M527 1220H541" stroke="#5d6266" stroke-width="3"/>
        </g>
        <path d="M497 747H513L505 756ZM497 957H513L505 966ZM497 1071H513L505 1080Z" fill="#33383f"/>
      </g>
    </svg>
  </main>

  <div class="layouts">
    <svg width="290" height="20" viewBox="13 737 290 20">
      <path d="M13 737.500H303" stroke="#8a8a8a"/>
      <path d="M31.500 738V756M50.500 738V756M69.500 738V756M88.500 738V756M13 756.500H89" stroke="#8d8d8d"/>
      <path d="M19 742.500V753M82.800 742.500V753" stroke="#555" stroke-width="1.500"/><path d="M27 742V753L21 747.500ZM46 742V753L40 747.500ZM57 742V753L63 747.500ZM75.500 742V753L81.500 747.500Z" fill="#5a5a5a"/>
      <path d="M90 737H157L151 756.500H96Z" fill="#212830"/><path d="M90.500 738L96 756.500M157 738L152.500 752L154.500 756.500H218L224.500 738M220 752L222 756.500H286L293 738M96 756.500H151" fill="none" stroke="#555"/>
      <g class="ltab"><text x="104" y="751.500" fill="#fff" textLength="38">Model</text><text x="163" y="751.500" fill="#111" textLength="46">Layout1</text><text x="231" y="751.500" fill="#111" textLength="47">Layout2</text></g>
    </svg>
  </div>
  <div class="cmd">
    <div class="grip"></div>
    <div class="cmdtext"><div class="hist">Command:</div><div class="prompt">Command:</div></div>
  </div>

  <footer class="status">
    <span class="coords">1554.9182, 3725.9276, 0.0000</span>
    <span class="cell"><svg width="21" height="21" viewBox="0 0 21 21"><path d="M2 9H16M9 2V15" stroke="#333"/><path d="M6 6H12V12H6Z" fill="none" stroke="#444"/><path d="M14 11V18M14 11H18V15" stroke="#d2552a" stroke-width="1.500" fill="none"/><path d="M17 12V16" stroke="#246ab0" stroke-width="2"/></svg></span>
    <span class="cell on"><svg width="21" height="21" viewBox="0 0 21 21"><path d="M4 6H14M4 9H14M4 12H14M4 15H16" stroke="#234" stroke-dasharray="1 1.500"/><path d="M15 5V11M15 13V15.500" stroke="#111" stroke-width="1.300"/></svg></span>
    <span class="cell on"><svg width="21" height="21" viewBox="0 0 21 21"><path d="M3.500 2.500H18.500V17.500H3.500ZM6.500 3V18M9.500 3V18M12.500 3V18M15.500 3V18M3 5.500H18M3 8.500H18M3 11.500H18M3 14.500H18" fill="#fff" stroke="#333"/></svg></span>
    <span class="cell"><svg width="21" height="21" viewBox="0 0 21 21"><path d="M3.500 3V17.500H19" fill="none" stroke="#444" stroke-width="1.500"/><path d="M4 12H9V17" fill="none" stroke="#777"/></svg></span>
    <span class="cell on"><svg width="21" height="21" viewBox="0 0 21 21"><path d="M14 14A5 5 0 1 1 12 7M9 11L16 4M9 11.500H17M12 8L15 11" fill="none" stroke="#333" stroke-width="1.100"/></svg></span>
    <span class="cell on"><svg width="21" height="21" viewBox="0 0 21 21"><path d="M5.500 4.500H18.500V17.500H5.500Z" fill="#fafbfd" stroke="#444"/><circle cx="4.500" cy="4.500" r="1.800" fill="#fff" stroke="#e0552a" stroke-width="1.200"/></svg></span>
    <span class="cell"><svg width="21" height="21" viewBox="0 0 21 21"><path d="M5 6L9 3H17V12L14 15H5ZM5 6H14V15M14 6L17 3" fill="#eef0f4" stroke="#777"/><circle cx="4.500" cy="16" r="1.800" fill="#fff" stroke="#e0552a" stroke-width="1.200"/></svg></span>
    <span class="cell on"><svg width="21" height="21" viewBox="0 0 21 21"><path d="M14 6L5 15H16" fill="none" stroke="#222" stroke-width="1.200"/></svg></span>
    <span class="cell on"><svg width="21" height="21" viewBox="0 0 21 21"><path d="M4 3V17H17M4 17L14 9M2.500 5L4 3L5.500 5M15 15.500L17 17L15 18.500" fill="none" stroke="#333"/><path d="M14 2L11 8H14L12 12L17 6H14.500L17 2Z" fill="#f9a826" stroke="#c86a10" stroke-width=".6"/></svg></span>
    <span class="cell on"><svg width="21" height="21" viewBox="0 0 21 21"><path d="M3 10H13M7.500 5V14" stroke="#111" stroke-width="1.200"/><path d="M10.500 10.500H16V13.500H10.500Z" fill="#fff" stroke="#111"/></svg></span>
    <span class="cell"><svg width="21" height="21" viewBox="0 0 21 21"><path d="M4 10.500H16" stroke="#111" stroke-width="1.600"/><path d="M10 5V16" stroke="#111"/></svg></span>
    <span class="cell on"><svg width="21" height="21" viewBox="0 0 21 21"><path d="M3 3H18V18H3Z" fill="#cfe5f7" stroke="#2168b3" stroke-width="1.200"/><path d="M5 6H17M5 10H17M5 14H17" stroke="#7fb4e0" stroke-width="2" stroke-dasharray="2 2"/><path d="M7 8H17M7 12H17M7 16H17" stroke="#7fb4e0" stroke-width="2" stroke-dasharray="2 2"/></svg></span>
    <span class="cell"><svg width="21" height="21" viewBox="0 0 21 21"><path d="M7.500 5.500H14.500V15.500H7.500Z" fill="#fff" stroke="#111"/><path d="M9 8.500H13M9 10.500H13M9 12.500H13" stroke="#111" stroke-dasharray="1 1 4"/></svg></span>
    <span class="cell"><svg width="21" height="21" viewBox="0 0 21 21"><path d="M2 6H9M5.500 2V9" stroke="#222"/><path d="M7 7H14V13H7Z" fill="#eee" stroke="#555"/><path d="M10 11H17V17H10Z" fill="#7dc36c" stroke="#2b7a1e" stroke-width="1.500"/></svg></span>
    <span class="spacer"></span>
    <span class="cell model">MODEL</span>
    <span class="cell"><svg width="21" height="21" viewBox="344 241 63 63"><path d="M358 252H391V284H358Z" fill="#eee" stroke="#333" stroke-width="3"/><path d="M364 257V278H378Z" fill="none" stroke="#333" stroke-width="4"/><path d="M352 290H398" stroke="#333" stroke-width="4"/></svg></span>
    <span class="cell"><svg width="21" height="21" viewBox="410 241 63 63"><path d="M418 251H440V274H418ZM444 251H465V274H444Z" fill="#eee" stroke="#333" stroke-width="4"/><path d="M418 281H465V288H418Z" fill="#666" stroke="#333" stroke-width="3"/></svg></span>
    <span class="gap g12"></span>
    <span class="cell scale"><svg width="20" height="21" viewBox="512 241 60 63"><use href="#scaleA" x="521" y="251" width="44" height="44"/></svg>1:1<i class="tri sm"></i></span>
    <span class="cell"><svg width="21" height="21" viewBox="671 241 63 63"><use href="#scaleA" x="680" y="250" width="42" height="42"/><circle cx="717" cy="270" r="8" fill="#ffe9a0" stroke="#f08a1c" stroke-width="4"/><path d="M713 280H721V291H713Z" fill="#777"/></svg></span>
    <span class="cell"><svg width="21" height="21" viewBox="737 241 63 63"><g opacity=".5"><use href="#scaleA" x="748" y="252" width="42" height="42"/><path d="M750 252L762 258M748 264L760 268" stroke="#444" stroke-width="4"/></g></svg></span>
    <span class="gap g6b"></span>
    <span class="cell"><svg width="21" height="21" viewBox="821 241 63 63"><circle cx="852" cy="269" r="21" fill="none" stroke="#444" stroke-width="6" stroke-dasharray="8 5.200"/><circle cx="852" cy="269" r="18" fill="#e9e9ec" stroke="#555" stroke-width="3"/><circle cx="852" cy="269" r="6" fill="#999" stroke="#333" stroke-width="3"/><path d="M872 280V290H862Z" fill="#000"/></svg></span>
    <span class="cell"><svg width="21" height="21" viewBox="887 241 63 63"><path d="M896 264H923V290H896Z" fill="#f0f0f2" stroke="#333" stroke-width="4"/><path d="M917 264V258Q920 250 929 251T938 264" fill="none" stroke="#333" stroke-width="5"/><path d="M909 272V282" stroke="#222" stroke-width="4"/></svg></span>
    <span class="cell"><svg width="21" height="21" viewBox="953 241 63 63"><path d="M961 254H997V276H961Z" fill="#9aa7b8" stroke="#4c5564" stroke-width="3"/><path d="M966 248V254M975 248V254M984 248V254M993 248V254M966 276V282M975 276V282" stroke="#444" stroke-width="3"/><circle cx="998" cy="268" r="8" fill="#ffe9a0" stroke="#f08a1c" stroke-width="4"/><path d="M994 278H1002V289H994Z" fill="#777"/></svg></span>
    <span class="gap tray"><svg width="55" height="21" viewBox="1019 241 165 63"><path d="M1036 248H1166V293H1036Z" fill="#a5a5a5" stroke="#4d4d4d" stroke-width="3"/><path d="M1048 251H1072L1084 262V282H1048Z" fill="#3772b0" stroke="#23486e" stroke-width="3"/><path d="M1050 276H1082V290H1050Z" fill="#f0d04a"/><path d="M1056 258L1064 266M1064 258L1056 266" stroke="#fff" stroke-width="4"/><path d="M1066 280L1076 289L1092 272" fill="none" stroke="#2aa52a" stroke-width="6"/><use href="#bulb" x="1116" y="250" width="30" height="44"/></svg></span>
    <span class="cell more"><i class="dn blk"></i></span>
    <span class="cell"><svg width="21" height="21" viewBox="1220 241 63 63"><path d="M1232 252H1271V289H1232Z" fill="#f1f3f6" stroke="#444" stroke-width="4"/><path d="M1234 254H1269V260H1234Z" fill="#556"/></svg></span>
    <span class="gap end"><svg width="20" height="21" viewBox="1286 241 60 63"><path d="M1337 266h6v6h-6zM1325 277h6v6h-6zM1337 277h6v6h-6zM1313 289h6v6h-6zM1325 289h6v6h-6zM1337 289h6v6h-6z" fill="#dcdcd4"/></svg></span>
  </footer>
</div>

<div class="under"><svg width="1600" height="9" viewBox="0 841 1600 9"><path d="M330.500 841V850M589.500 841V850M607.500 841V850M866.500 841V850M884.500 841V850M1143.500 841V850M1162.500 841V850H1192L1199 845.500L1192 841M1226 850V847.500H1348V850M1380 841L1375 846L1380 850H1412L1417 846L1412 841M1420.500 841V850M1530.500 841V850" fill="none" stroke="#bdbdbd"/></svg></div>

<div class="taskbar">
  <div class="start"><svg width="20" height="20" viewBox="0 0 20 20"><path d="M0 3L8.500 1.800V9.500H0ZM9.500 1.600L20 0V9.500H9.500ZM0 10.500H8.500V18.200L0 17ZM9.500 10.500H20V20L9.500 18.400Z" fill="#fff"/></svg></div>
  <div class="search"><span class="ring"></span><span class="ph">Digite aqui para pesquisar</span><svg width="15" height="21" viewBox="0 0 15 21"><rect x="4.500" y="1" width="6" height="12" fill="none" stroke="#333" stroke-width="1.400"/><path d="M1 9V14Q1 16 3 16H12Q14 16 14 14V9M7.500 16V20M4 20H11" fill="none" stroke="#333" stroke-width="1.600"/></svg></div>
  <div class="app ff"><svg width="29" height="30" viewBox="0 0 29 30"><path d="M2 8Q4 6 5 3Q7 7 11 8Q14 6 15 0Q20 4 21 8L24 6Q29 12 28.500 17A14 13.500 0 0 1 .5 16Q.5 11 2 8Z" fill="url(#gf)"/><path d="M2 20A14 13.500 0 0 0 27 22Q18 30 8 24Q4 22 2 20Z" fill="#f0226f"/><circle cx="15" cy="15.500" r="5.500" fill="#7a3fd8"/><path d="M5 10Q10 8 15 12Q11 13 10 16Q11 21 17 21.500Q8 25 5 16Z" fill="#ff7a1c"/></svg></div>
  <div class="app"><svg width="26" height="28" viewBox="0 0 26 28"><path d="M1 12Q2 1 13 0Q25 1 25 12V16H8.500Q9 22 16 22.500Q20 22.500 23 21V26Q19 28 15 28Q3 27 3 16Q4 9 11 6Q4 7 1 12ZM9 11.500H17.500Q17.500 6.500 13.500 6.500Q9.500 7 9 11.500Z" fill="#0f7bd8" fill-rule="evenodd"/></svg></div>
  <div class="app ex"><svg width="28" height="25" viewBox="0 0 28 25"><path d="M0 1H12L14 3H28V23H0Z" fill="#fde38c"/><path d="M0 1H11L13 4H0Z" fill="#f6c22c"/><path d="M2 2H8V3.500H2Z" fill="#fff"/><path d="M5 24V13H23V24H19V18H9V24Z" fill="#38b0e6"/></svg></div>
  <div class="app run"><svg width="28" height="28" viewBox="0 0 28 28"><circle cx="14" cy="14" r="14" fill="#ffce3f"/><path d="M14 14L1.900 7A14 14 0 0 1 26.100 7.500H14Z" fill="#dd4b3e"/><path d="M14 14L8 10.500L1.900 7A14 14 0 0 0 14 28L20 17.500Z" fill="#1ea362"/><circle cx="14" cy="14" r="6.500" fill="#fff"/><circle cx="14" cy="14" r="5.200" fill="#4a8af4"/></svg></div>
  <div class="app cur"><svg width="29" height="30" viewBox="0 0 29 30"><path d="M0 5H29V29H0Z" fill="url(#gk)"/><path d="M16 21H29V29H11Z" fill="#fff" opacity=".7"/><path d="M3 23L8 1L12 0L20 20L14 21.500L13 18L9 19V22Z" fill="url(#gr)"/><path d="M10.500 9L12 14H9.500Z" fill="#333"/></svg></div>
  <div class="edge"></div>
  <div class="tasksp"></div>
  <svg width="116" height="50" viewBox="1280 850 116 50" fill="none"><path d="M1284 879L1292 871L1300 879" stroke="#fff" stroke-width="1.400"/><path d="M1322 865.500L1332 869V876Q1331 882 1322 885Q1313 882 1312 876V869Z" fill="#fff"/><path d="M1322 866V885M1312 875.500H1332" stroke="#0b1615"/><circle cx="1326.500" cy="879.500" r="5.500" fill="#d8232a"/><path d="M1324 877L1329 882M1329 877L1324 882" stroke="#fff" stroke-width="1.300"/><path d="M1345 867.500H1361.500V879.500H1344.500V872M1353 879.500V883M1348 883.500H1356M1342.500 867.500H1346.500V871.500H1342.500Z" stroke="#fff" stroke-width="1.200"/><path d="M1372.500 872H1375L1379.500 868V882L1375 878H1372.500Z M1382 872Q1384 875 1382 878.500M1385 869.500Q1389 875 1385 881" stroke="#fff" stroke-width="1.200"/><path d="M1388 867Q1394 875 1388 883" stroke="#777"/></svg>
  <div class="two lang"><span>POR</span><span>PTB2</span></div>
  <div class="two clock"><span>10:17</span><span>09/08/2021</span></div>
  <svg width="75" height="50" viewBox="1525 850 75 50"><path d="M1549 865H1569V883H1560L1554 888V883H1549Z" fill="#fff"/><path d="M1552 869.500H1566M1552 873.500H1566M1552 877.500H1561" stroke="#111" stroke-width="1.200"/><circle cx="1568.500" cy="884.500" r="10" fill="#27302f" stroke="#8a8f8e"/><text x="1568.500" y="890" class="badge">1</text><path d="M1594.500 850V900" stroke="#667"/></svg>
</div>
</div>
</body>
</html>
```
FILE: styles.css
```css
* { box-sizing: border-box; }
body { margin: 0; width: 1600px; height: 900px; overflow: hidden; font-family: "Open Sans", "Noto Sans", sans-serif; color: #3d3d3d; }
svg { display: block; flex: none; }
.defs { position: absolute; }
i { font-style: normal; flex: none; }
.desktop {
  width: 1600px; height: 900px; padding-top: 3px;
  background:
    linear-gradient(#d5d5d5, #d5d5d5) 0 168px / 100% 1px no-repeat,
    linear-gradient(#e2e2e2, #e2e2e2) 0 642px / 100% 1px no-repeat,
    linear-gradient(#3b4042 0 43px, #323237 43px 89px, #fcfcfc 89px);
}
.window { margin-left: 11px; width: 1578px; height: 838px; display: flex; flex-direction: column; box-shadow: 0 1px 7px rgba(0,0,0,.5); background: #666; }

.titlebar { height: 37px; background: #fff; display: flex; align-items: flex-end; position: relative; border-top: 1px solid #f4f4f4; flex: none; }
.appbtn { position: absolute; left: 0; top: 12px; width: 41px; height: 41px; border: 1px solid #222; background: linear-gradient(#d8d8d8, #a4a4a4 50%, #787878); z-index: 2; }
.appbtn svg { margin: -1px; }
.qat { margin-left: 41px; padding-left: 6px; height: 24px; width: 246px; background: linear-gradient(90deg, transparent 4px, #fff 4px 6px, transparent 6px), linear-gradient(#a3a3a3, #6b6b6b); display: flex; align-items: flex-end; flex: none; }
.workspace { width: 225px; height: 23px; border: 1px solid #666; border-width: 1px 1px 0; background: linear-gradient(#ececec, #c6c6c6); display: flex; align-items: center; padding: 0 3px 0 3px; color: #111; font-size: 15px; flex: none; }
.ws-name { flex: 1; letter-spacing: -.22px; line-height: 20px; padding-top: 5px; margin-left: -1px; white-space: nowrap; }
.workspace .tri { margin-top: 5px; }
.qat-more { width: 19px; height: 24px; background: linear-gradient(#888, #4a4a4a); margin-left: 1px; flex: none; padding-top: 1px; }
.doc-title { width: 431px; height: 35px; font-size: 15px; color: #111; white-space: nowrap; display: flex; line-height: 33px; flex: none; }
.ver { display: block; width: 218px; letter-spacing: -.25px; flex: none; text-indent: -6px; }
.doc { letter-spacing: -.42px; }
.qat-more, .workspace { position: relative; z-index: 1; }
.info-arrow { width: 17px; height: 24px; background: linear-gradient(#999, #606060); border: 1px solid #666; border-bottom: 0; flex: none; }
.search-help { width: 224px; height: 24px; border-top: 2px solid #5c5c5c; background: #f6f6f6; color: #777; font-size: 14px; font-style: italic; padding: 7px 0 0 4px; line-height: 16px; white-space: nowrap; letter-spacing: -.23px; flex: none; }
.infobar { width: 274px; height: 24px; border-top: 1px solid #555; background: linear-gradient(#a3a3a3, #666); display: flex; flex: none; }
.signin { flex: 1; border-left: 1px solid #eee; color: #fff; font-size: 14.5px; line-height: 23px; letter-spacing: -.1px; margin-top: 2px; }
.help-q { font: bold 44px "Open Sans", sans-serif; fill: #2a56b8; text-anchor: middle; }
.winctl { align-self: stretch; flex: 1; }
.winctl svg { overflow: visible; margin-left: 11px; }

.tabs { height: 24px; background: #3f3f3f; display: flex; align-items: flex-end; color: #f2f2f2; font-size: 14.5px; letter-spacing: -.33px; padding-left: 57px; flex: none; white-space: nowrap; }
.tab { height: 24px; line-height: 28px; flex: none; }
.tab.active { width: 64px; height: 21px; line-height: 21px; margin-right: 12px; padding-right: 1px; text-align: center; color: #333; background: linear-gradient(#d9d9d9, #fff); border: 1px solid #fff; border-bottom: 0; border-radius: 2px 2px 0 0; }
.w60 { width: 60px; } .w86 { width: 86px; } .w94 { width: 94px; } .w56 { width: 56px; } .w78 { width: 78px; } .w70 { width: 70px; } .w68 { width: 68px; } .w129 { width: 129px; }
.tabs svg { margin-bottom: 5px; }

.ribbon { height: 125px; background: #fdfdfd; border-left: 1px solid #ddd; border-right: 3px solid #8e8e8e; display: flex; flex: none; font-size: 14.5px; letter-spacing: -.35px; white-space: nowrap; border-bottom: 1px solid #c4c4c4; }
.panel { display: flex; flex-direction: column; border-right: 1px solid #9b9b9b; flex: none; height: 123px; }
.p-draw { width: 278px; } .p-modify { width: 316px; } .p-layers { width: 267px; } .p-anno { width: 106px; } .p-block { width: 100px; }
.p-props { width: 202px; } .p-groups { width: 85px; } .p-util { width: 121px; } .p-clip { width: 98px; border-right: 0; }
.pbody { height: 101px; display: flex; }
.ptitle { height: 22px; margin: 0 2px 0 1px; background: #eee; border-top: 1px solid #ccc; border-bottom: 1px solid #d6d6d6; display: flex; align-items: center; justify-content: center; gap: 8px; line-height: 20px; padding-top: 2px; padding-left: 1px; }
.ptitle.pr { padding-left: 49px; justify-content: flex-start; }
.launch { margin-left: 44px; }
.tri { border: 5px solid transparent; border-top-color: #333; border-bottom: 0; width: 0; height: 0; }
.dn { border: 3px solid transparent; border-top: 4px solid #333; border-bottom: 0; width: 0; height: 0; }
.big { display: flex; flex-direction: column; align-items: center; flex: none; }
.big span { line-height: 26px; height: 26px; }
.big.low span { padding-top: 1px; }
.big.low .dn { margin-top: 1px; }
.w52 { width: 52px; } .w55 { width: 55px; } .w69 { width: 69px; } .w46 { width: 46px; } .w58 { width: 57px; } .w51 { width: 51px; } .w87 { width: 87px; } .w65 { width: 65px; }
.w69 svg { margin-left: 0; }
.nr { margin-right: 2px; }
.nl { margin-left: 1px; }
.nudge { margin-left: 2px; }
.col { padding-top: 6px; display: flex; flex-direction: column; gap: 4px; flex: none; }
.row { display: flex; height: 27px; align-items: center; }
.row > span { line-height: 27px; padding-top: 1px; }
.c90 { width: 90px; margin-left: 7px; } .c88 { width: 88px; } .c92 { width: 92px; }
.tx46 { width: 44px; } .tx49 { width: 47px; } .tx48 { width: 46px; }
.p-draw .col { margin-left: 2px; }
.btn { display: flex; align-items: center; justify-content: center; width: 29px; height: 27px; box-shadow: inset 0 0 0 1px #cbcbcb; background: linear-gradient(#fcfcfc, #e9e9e9); flex: none; }
.btn.dd { width: 15px; }
.btn.on { background: #a9cdf0; box-shadow: inset 0 0 0 1px #1463c0; }
.p-layers .col { margin-left: 2px; gap: 3px; padding-top: 7px; }
.lrow .btn { width: 29.500px; }
.g6 { margin-left: 6px; }
.select { height: 28px; border: 1px solid #c9c9c9; background: linear-gradient(#fcfcfc, #e6e6e6); display: flex; align-items: center; padding: 0 5px 0 2px; }
.select span { flex: 1; }
.s261 { width: 261px; margin-top: 1px; } .s260 { width: 260px; margin-top: -1px; } .s171 { width: 171px; }
.s261 span { letter-spacing: -.3px; }
.s260 svg { margin-left: -3px; }
.s260 { padding-right: 1px; }
.s260 span { padding-left: 3px; }
.p-props .col { padding-top: 7px; gap: 3px; }
.p-props .select { padding-right: 2px; }
.p-props .sp1 { padding-right: 5px; }
.sp3 { margin-top: -1px; }
.swatch { width: 20px; height: 20px; border: 1px solid #000; background: #fff; margin-right: 2px; }
.lw { width: 80px; height: 2px; background: #555; margin: 0 2px 0 2px; }
.lt { width: 74px; height: 1px; background: #111; margin: 0 2px 0 8px; }
.ln { stroke: #63666c; stroke-width: 5; }
.ln:not([fill]) { fill: none; }
.hd { fill: #fff; stroke: #3c3f45; stroke-width: 3; }
.sh { fill: none; stroke: #5a5d63; stroke-width: 4; stroke-linejoin: round; }
.bl { fill: #a6d3ef; stroke: #1d6fb4; stroke-width: 4; }
.bs { fill: none; stroke: #2a7cc4; stroke-width: 4; }
.dash { fill: none; stroke: #333; stroke-width: 3; stroke-dasharray: 4 3; }

.viewport { height: 548px; border-top: 4px solid #6b6b6b; border-left: 2px solid #8a8a8a; border-right: 2px solid #eee; background: linear-gradient(#a8a8a8 0 1px, #555 1px 2px, #212830 2px); padding-top: 2px; flex: none; }
.g-min { stroke: #262e39; } .g-maj { stroke: #30374a; }
.vlabel { font: 12px "Noto Sans", sans-serif; fill: #eee; }
.plan path { fill: none; stroke: #fff; shape-rendering: crispEdges; }
.plan .aa { shape-rendering: auto; }
.cadtext { font-family: "Liberation Sans", Arial, sans-serif; fill: #fff; }
.soft { opacity: .88; }
.cube, .compass { font-family: "Liberation Sans", Arial, sans-serif; font-weight: bold; text-anchor: middle; }
.compass { font-size: 47px; fill: #aaabad; }
.wcs { font: 31px "Liberation Sans", Arial, sans-serif; fill: #545967; }

.layouts { height: 22px; background: #efefef; border-bottom: 2px solid #fff; border-right: 1px solid #fff; padding-left: 2px; flex: none; box-shadow: inset 0 1px 0 #888; }
.ltab { font: 13px "Liberation Sans", Arial, sans-serif; }
.cmd { height: 61px; display: flex; border-top: 4px solid #666; flex: none; border-bottom: 1px solid #000; }
.grip { width: 16px; background: repeating-linear-gradient(90deg, #333 0 1px, transparent 1px 2px) 2px 3px / 12px 1px no-repeat, repeating-linear-gradient(90deg, #333 0 1px, transparent 1px 2px) 2px 5px / 12px 1px no-repeat, #a0a0a0; border-right: 2px solid #ececec; }
.cmdtext { flex: 1; font-family: "Noto Sans Mono", "DejaVu Sans Mono", monospace; color: #111; }
.hist { height: 34px; background: #c8c8c8; border-bottom: 1px solid #999; line-height: 22px; }
.prompt { height: 22px; background: #fff; line-height: 25px; }
.hist, .prompt { font-size: 14.5px; letter-spacing: .3px; padding-left: 1px; }

.status { height: 21px; background: linear-gradient(#959595, #787878); display: flex; flex: none; font-size: 12.5px; color: #1a1a1a; white-space: nowrap; }
.coords { width: 199px; padding-left: 12px; line-height: 21px; border-right: 1px solid #444; color: #111; letter-spacing: -.17px; }
.cell { width: 22px; border-right: 1px solid #555; background: linear-gradient(#bcbcbc, #9c9c9c); flex: none; display: flex; align-items: center; }
.cell.on { background: linear-gradient(#dff0f5, #b5dce7 45%, #8fc6d8 55%, #b9e0ea); }
.spacer { flex: 1; border-right: 1px solid #555; }
.model { width: 54px; justify-content: center; font-size: 14px; letter-spacing: -.3px; }
.gap { border-right: 1px solid #555; background: linear-gradient(#858585, #6f6f6f); flex: none; }
.g12 { width: 12px; } .g6b { width: 6px; } .tray { width: 56px; }
.scale { width: 53px; font-size: 13.5px; letter-spacing: -.4px; }
.sm { border-width: 5px 4px 0; margin-left: 4px; border-top-color: #000; margin-top: -4px; }
.more { width: 11px; justify-content: center; }
.end { width: 20px; border: 0; background: none; }
.blk { border-top-color: #000; }

.under { height: 9px; }
.taskbar { height: 50px; display: flex; align-items: center; background: linear-gradient(90deg, #0a0a0a 0 1100px, #0b1514 1300px, #0e1c1b); color: #f2f2f2; position: relative; }
.start { width: 60px; display: flex; justify-content: center; flex: none; }
.search { width: 430px; height: 50px; background: #f1f1f1; border-top: 1px solid #bbb; display: flex; align-items: center; padding: 0 18px 0 11px; flex: none; }
.ring { width: 28px; height: 28px; border: 4px solid #0a0a0a; border-radius: 50%; }
.ph { flex: 1; padding-left: 11px; font-size: 17px; letter-spacing: -.33px; color: #3a3a3a; }
.app { width: 62px; height: 50px; display: flex; align-items: center; justify-content: center; flex: none; }
.app.ff { width: 66px; }
.app.ff + .app { width: 60px; }
.ex { width: 64px; }
.run { width: 52px; margin-left: 4px; border-bottom: 3px solid #76b9ed; padding-top: 3px; }
.cur { width: 55px; margin-left: 6px; background: #3d3d3d; border-bottom: 3px solid #76b9ed; padding-left: 4px; padding-top: 3px; }
.edge { width: 5px; height: 50px; background: #333; border-left: 1px solid #222; border-bottom: 3px solid #5a90bb; flex: none; }
.tasksp { flex: 1; }
.two { display: flex; flex-direction: column; align-items: center; font-size: 14px; letter-spacing: -.5px; flex: none; line-height: 23px; }
.lang { width: 46px; } .clock { width: 83px; padding-left: 9px; letter-spacing: -.1px; }
.badge { font: 15px "Open Sans", sans-serif; fill: #fff; text-anchor: middle; }
```
